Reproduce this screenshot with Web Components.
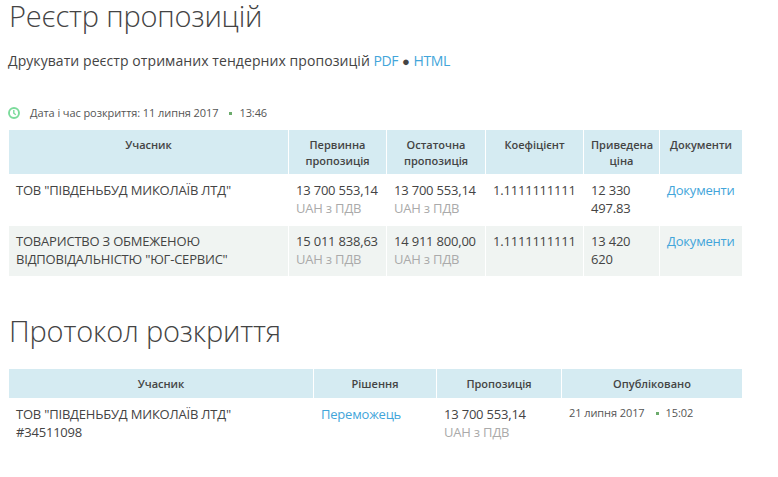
<!DOCTYPE html>
<html lang="uk">
<head>
<meta charset="utf-8">
<title>Реєстр пропозицій</title>
<style>
	html, body { margin: 0; background: #fff; }
	body { font: 13px/18px "Open Sans", sans-serif; color: #444; }
	main { display: block; width: 778px; }
</style>
</head>
<body>
<main>
	<page-title>Реєстр пропозицій</page-title>
	<print-line>
		Друкувати реєстр отриманих тендерних пропозицій
		<a slot="pdf">PDF</a>
		<a slot="html">HTML</a>
	</print-line>
	<open-date date="Дата і час розкриття: 11 липня 2017" time="13:46" clock></open-date>

	<data-table style="--cols: 279px 97px 98px 97px 75px 82px; --pad: 6px; margin-top: 9px">
		<table-head>Учасник</table-head>
		<table-head>Первинна<br>пропозиція</table-head>
		<table-head>Остаточна<br>пропозиція</table-head>
		<table-head>Коефіцієнт</table-head>
		<table-head>Приведена<br>ціна</table-head>
		<table-head>Документи</table-head>

		<table-cell>ТОВ "ПІВДЕНЬБУД МИКОЛАЇВ ЛТД"</table-cell>
		<table-cell><price-value>13 700 553,14</price-value></table-cell>
		<table-cell><price-value>13 700 553,14</price-value></table-cell>
		<table-cell>1.1111111111</table-cell>
		<table-cell>12 330 497.83</table-cell>
		<table-cell><cell-link>Документи</cell-link></table-cell>

		<table-cell alt>ТОВАРИСТВО З ОБМЕЖЕНОЮ ВІДПОВІДАЛЬНІСТЮ "ЮГ-СЕРВИС"</table-cell>
		<table-cell alt><price-value>15 011 838,63</price-value></table-cell>
		<table-cell alt><price-value>14 911 800,00</price-value></table-cell>
		<table-cell alt>1.1111111111</table-cell>
		<table-cell alt>13 420 620</table-cell>
		<table-cell alt><cell-link>Документи</cell-link></table-cell>
	</data-table>

	<page-title second>Протокол розкриття</page-title>

	<data-table style="--cols: 304px 122px 124px 180px; --pad: 7px; margin-top: 22px">
		<table-head single>Учасник</table-head>
		<table-head single>Рішення</table-head>
		<table-head single>Пропозиція</table-head>
		<table-head single>Опубліковано</table-head>

		<table-cell>ТОВ "ПІВДЕНЬБУД МИКОЛАЇВ ЛТД"<br>#34511098</table-cell>
		<table-cell><cell-link>Переможець</cell-link></table-cell>
		<table-cell><price-value>13 700 553,14</price-value></table-cell>
		<table-cell><open-date date="21 липня 2017" time="15:02" inline></open-date></table-cell>
	</data-table>
</main>

<script>
	const define = (name, css, html = "<slot></slot>") => {
		customElements.define(name, class extends HTMLElement {
			constructor() {
				super();
				this.attachShadow({ mode: "open" }).innerHTML = `<style>${css}</style>${html}`;
			}
		});
	};

	define("page-title", `
		:host {
			display: block;
			padding-left: 9px;
			font-size: 29px;
			font-weight: 300;
			letter-spacing: -.18px;
			line-height: 32px;
			color: #444;
		}
		:host([second]) { margin-top: 39px; }
	`);

	define("print-line", `
		:host { display: block; height: 20px; padding-left: 8px; margin-top: 19px; font-size: 14px; letter-spacing: .07px; line-height: 20px; white-space: nowrap; }
		::slotted(a) { color: #42a5da; letter-spacing: -.4px; }
		.dot { font-size: 13px; line-height: 1; }
	`, `<slot></slot> <slot name="pdf"></slot> <span class="dot">●</span> <slot name="html"></slot>`);

	define("cell-link", `:host { color: #42a5da; }`);

	define("price-value", `
		:host { display: block; white-space: nowrap; }
		.tax { display: block; color: #aaa; }
	`, `<slot></slot><span class="tax">UAH з ПДВ</span>`);

	customElements.define("open-date", class extends HTMLElement {
		constructor() {
			super();
			const clock = this.hasAttribute("clock") ? `
				<svg width="12" height="12" viewBox="0 0 12 12" fill="none" stroke="#7bdb9b">
					<circle cx="6" cy="6" r="5" stroke-width="1.9"/>
					<path d="M5.8 3v3.2l2 1.6" stroke-width="1.4"/>
				</svg>` : "";
			this.attachShadow({ mode: "open" }).innerHTML = `
				<style>
					:host {
						display: flex;
						align-items: center;
						font-size: 11px;
						letter-spacing: -.08px;
						line-height: 16px;
						color: #555;
						white-space: nowrap;
					}
					:host([clock]) { margin: 34px 0 0 8px; }
					svg { margin-right: 10px; flex: none; }
					.sep { width: 3px; height: 3px; margin: 0 7px 0 11px; background: #6cab6c; flex: none; }
				</style>
				${clock}<span>${this.getAttribute("date")}</span><i class="sep"></i><span>${this.getAttribute("time")}</span>
			`;
		}
	});

	define("data-table", `
		:host {
			display: grid;
			grid-template-columns: var(--cols);
			column-gap: 1px;
			margin-left: 9px;
			width: 733px;
		}
	`);

	define("table-head", `
		:host {
			display: block;
			background: #d5ebf2;
			min-height: 44px;
			box-sizing: border-box;
			margin-bottom: 1px;
			padding: 7px 7px 0;
			font-size: 11px;
			font-weight: 600;
			line-height: 15.5px;
			text-align: center;
			color: #444;
		}
		:host([single]) { min-height: 29px; margin-bottom: 0; }
	`);

	define("table-cell", `
		:host {
			display: block;
			box-sizing: border-box;
			padding: var(--pad) 7px 0;
			min-height: 51px;
			letter-spacing: -.2px;
		}
		:host([alt]) { background: #f0f4f2; min-height: 50px; }
	`);
</script>
</body>
</html>
